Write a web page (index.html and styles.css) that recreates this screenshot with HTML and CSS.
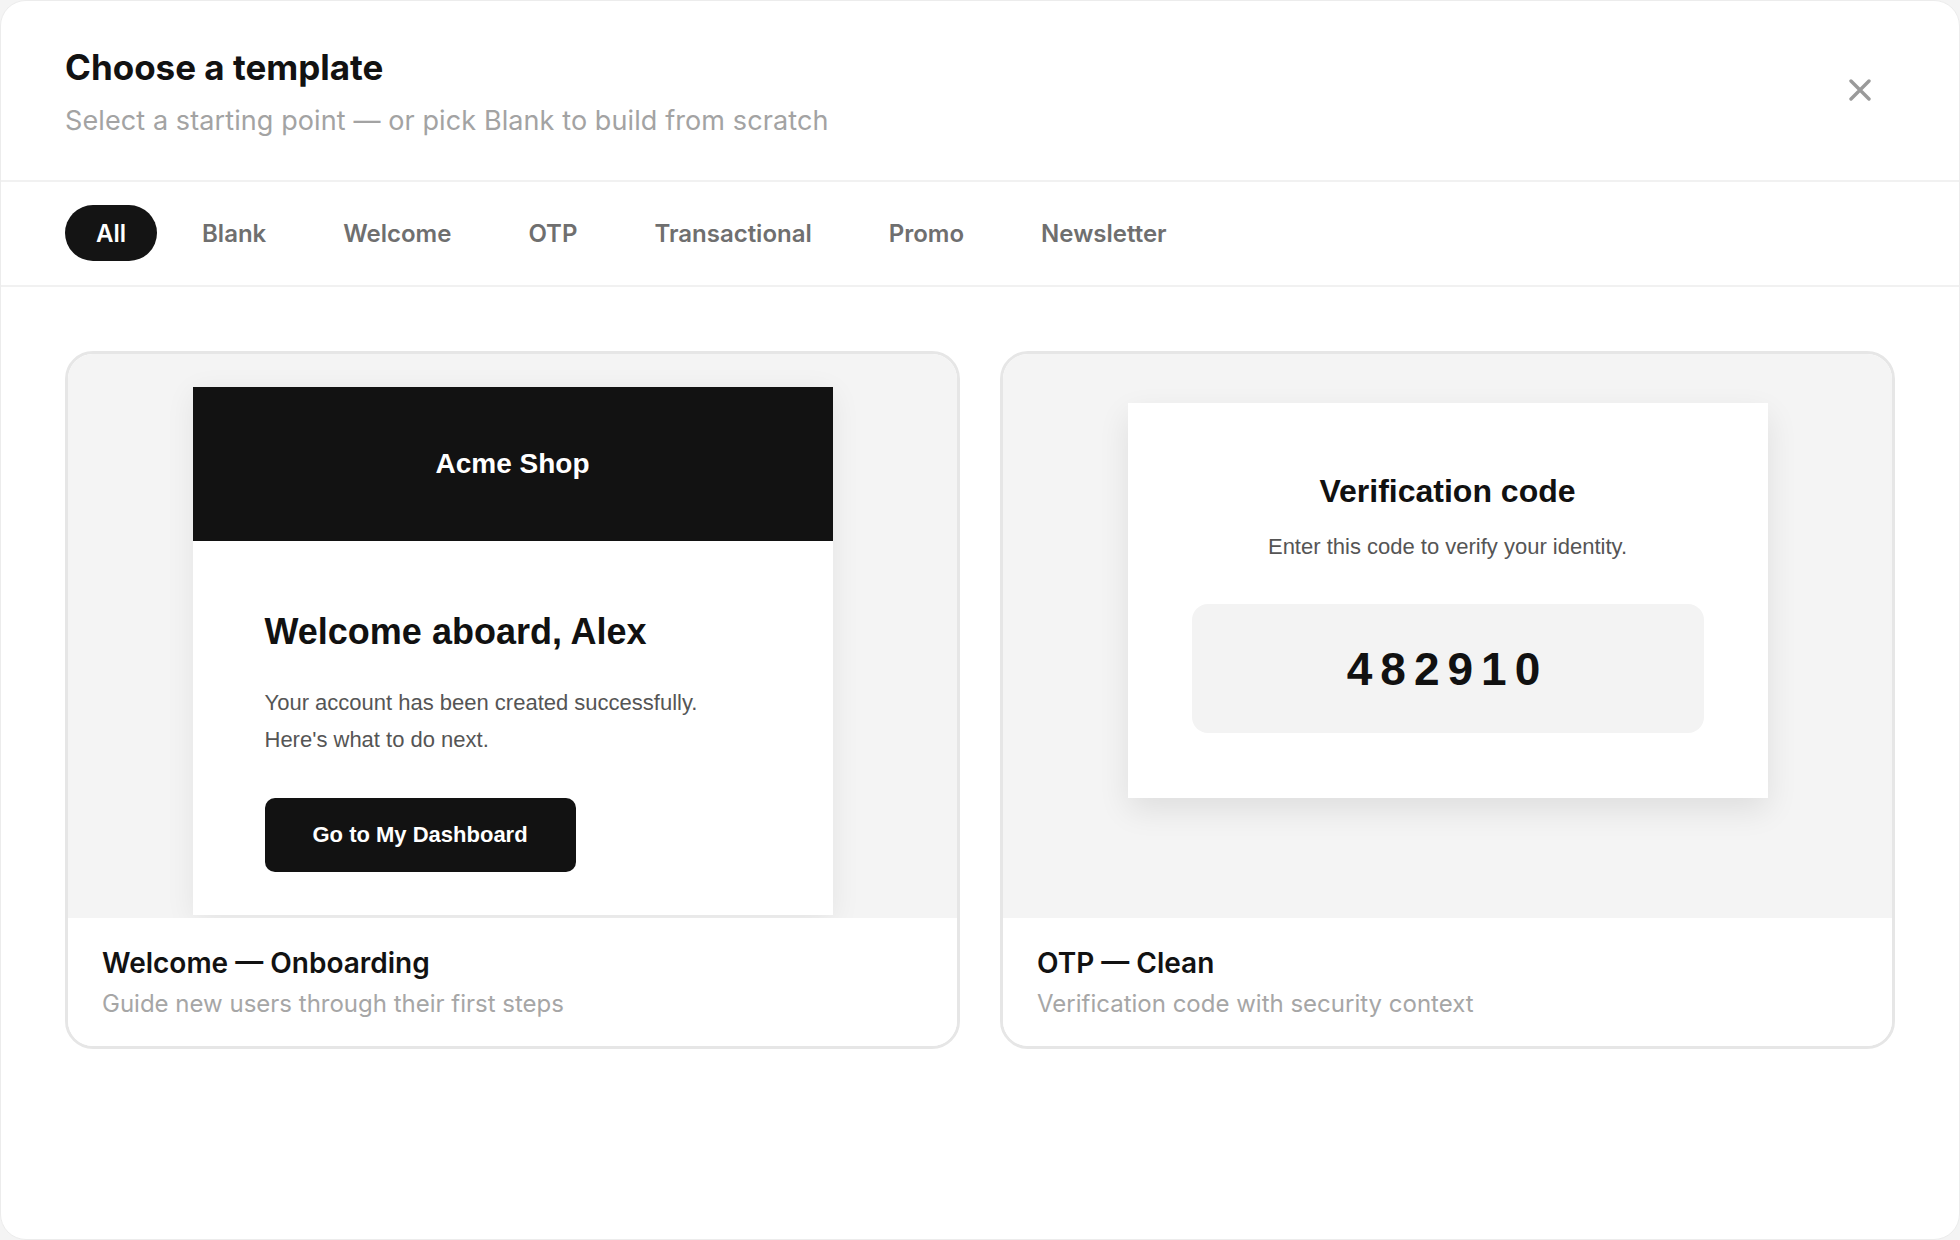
FILE: index.html
```html
<!DOCTYPE html>
<html lang="en">
<head>
<meta charset="utf-8">
<title>Choose a template</title>
<link rel="stylesheet" href="styles.css">
</head>
<body>
<div class="modal">
  <header class="modal-header">
    <div class="heading">
      <h1 class="title">Choose a template</h1>
      <p class="subtitle">Select a starting point — or pick Blank to build from scratch</p>
    </div>
    <button class="close" aria-label="Close">
      <svg width="22" height="22" viewBox="0 0 22 22"><path d="M2 2 L20 20 M20 2 L2 20" stroke="#9a9a9a" stroke-width="3.4" stroke-linecap="round"/></svg>
    </button>
  </header>
  <nav class="tabs">
    <span class="tab active">All</span>
    <span class="tab">Blank</span>
    <span class="tab">Welcome</span>
    <span class="tab">OTP</span>
    <span class="tab">Transactional</span>
    <span class="tab">Promo</span>
    <span class="tab">Newsletter</span>
  </nav>
  <main class="grid">
    <article class="card">
      <div class="preview preview-welcome">
        <div class="email welcome-email">
          <div class="email-brand">Acme Shop</div>
          <div class="email-body">
            <h2 class="email-h">Welcome aboard, Alex</h2>
            <p class="email-p">Your account has been created successfully.<br>Here's what to do next.</p>
            <span class="email-btn">Go to My Dashboard</span>
          </div>
        </div>
      </div>
      <div class="card-foot">
        <div class="card-title">Welcome — Onboarding</div>
        <div class="card-sub">Guide new users through their first steps</div>
      </div>
    </article>
    <article class="card">
      <div class="preview preview-otp">
        <div class="email otp-email">
          <h2 class="otp-h">Verification code</h2>
          <p class="otp-p">Enter this code to verify your identity.</p>
          <div class="otp-code">482910</div>
        </div>
      </div>
      <div class="card-foot">
        <div class="card-title">OTP — Clean</div>
        <div class="card-sub">Verification code with security context</div>
      </div>
    </article>
  </main>
</div>
</body>
</html>
```
FILE: styles.css
```css
* { box-sizing: border-box; }
html, body { margin: 0; padding: 0; }
body {
  background: #f4f4f4;
  font-family: Inter, "Noto Sans", sans-serif;
  width: 1960px;
  height: 1240px;
  overflow: hidden;
}
.modal {
  width: 1960px;
  height: 1240px;
  background: #fff;
  border-radius: 26px;
  border: 1px solid #ececec;
  display: flex;
  flex-direction: column;
}
.modal-header {
  display: flex;
  align-items: center;
  justify-content: space-between;
  padding: 45px 88px 43px 64px;
  border-bottom: 2px solid #f1f1f1;
}
.title {
  margin: 0;
  font-size: 35px;
  line-height: 42px;
  font-weight: 700;
  color: #121212;
  letter-spacing: 0;
}
.subtitle {
  margin: 17px 0 0;
  font-size: 27px;
  line-height: 32px;
  color: #a3a3a3;
  font-weight: 400;
  letter-spacing: 0.1px;
}
.close {
  background: none;
  border: 0;
  padding: 0;
  width: 22px;
  height: 22px;
  display: flex;
  cursor: pointer;
  margin-bottom: 4px;
}
.tabs {
  display: flex;
  align-items: center;
  gap: 13px;
  padding: 23px 64px 24px;
  border-bottom: 2px solid #f1f1f1;
}
.tab {
  height: 56px;
  display: flex;
  align-items: center;
  padding: 0 32px;
  border-radius: 28px;
  font-size: 24px;
  font-weight: 600;
  color: #6f6f6f;
}
.tab.active {
  background: #141414;
  color: #fff;
  padding: 0 31px;
}
.grid {
  display: grid;
  grid-template-columns: 1fr 1fr;
  gap: 40px;
  padding: 64px 64px 0;
  align-items: start;
}
.card {
  border: 3px solid #e6e6e6;
  border-radius: 28px;
  overflow: hidden;
  background: #fff;
}
.preview {
  background: #f4f4f4;
  height: 564px;
  overflow: hidden;
  display: flex;
  justify-content: center;
  align-items: flex-start;
}
.preview-welcome { padding-top: 33px; }
.preview-otp { padding-top: 49px; }
.email {
  width: 640px;
  background: #fff;
  font-family: "Liberation Sans", Arial, sans-serif;
  flex-shrink: 0;
}
.welcome-email {
  height: 528px;
  box-shadow: 0 6px 28px rgba(0,0,0,0.07);
}
.email-brand {
  background: #121212;
  color: #fff;
  height: 154px;
  display: flex;
  align-items: center;
  justify-content: center;
  font-size: 28px;
  font-weight: 700;
}
.email-body { padding: 70px 72px 0; }
.email-h {
  margin: 0;
  font-size: 36px;
  line-height: 42px;
  font-weight: 700;
  color: #111;
}
.email-p {
  margin: 31px 0 0;
  font-size: 22px;
  line-height: 37px;
  color: #555;
}
.email-btn {
  display: inline-block;
  margin-top: 40px;
  background: #121212;
  color: #fff;
  font-size: 22px;
  font-weight: 700;
  line-height: 26px;
  padding: 24px 48px;
  border-radius: 10px;
}
.otp-email {
  padding: 68px 64px 65px;
  text-align: center;
  box-shadow: 0 12px 30px rgba(0,0,0,0.09);
}
.otp-h {
  margin: 0;
  font-size: 32px;
  line-height: 40px;
  font-weight: 700;
  color: #111;
}
.otp-p {
  margin: 21px 0 0;
  font-size: 22px;
  line-height: 30px;
  color: #555;
}
.otp-code {
  margin-top: 42px;
  height: 129px;
  border-radius: 16px;
  background: #f3f3f3;
  display: flex;
  align-items: center;
  justify-content: center;
  font-size: 46px;
  font-weight: 700;
  letter-spacing: 8px;
  color: #111;
}
.card-foot {
  padding: 28px 34px 27px;
  background: #fff;
}
.card-title {
  font-size: 28px;
  line-height: 34px;
  font-weight: 600;
  color: #121212;
}
.card-sub {
  margin-top: 9px;
  font-size: 24px;
  line-height: 30px;
  color: #a6a6a6;
}
```
